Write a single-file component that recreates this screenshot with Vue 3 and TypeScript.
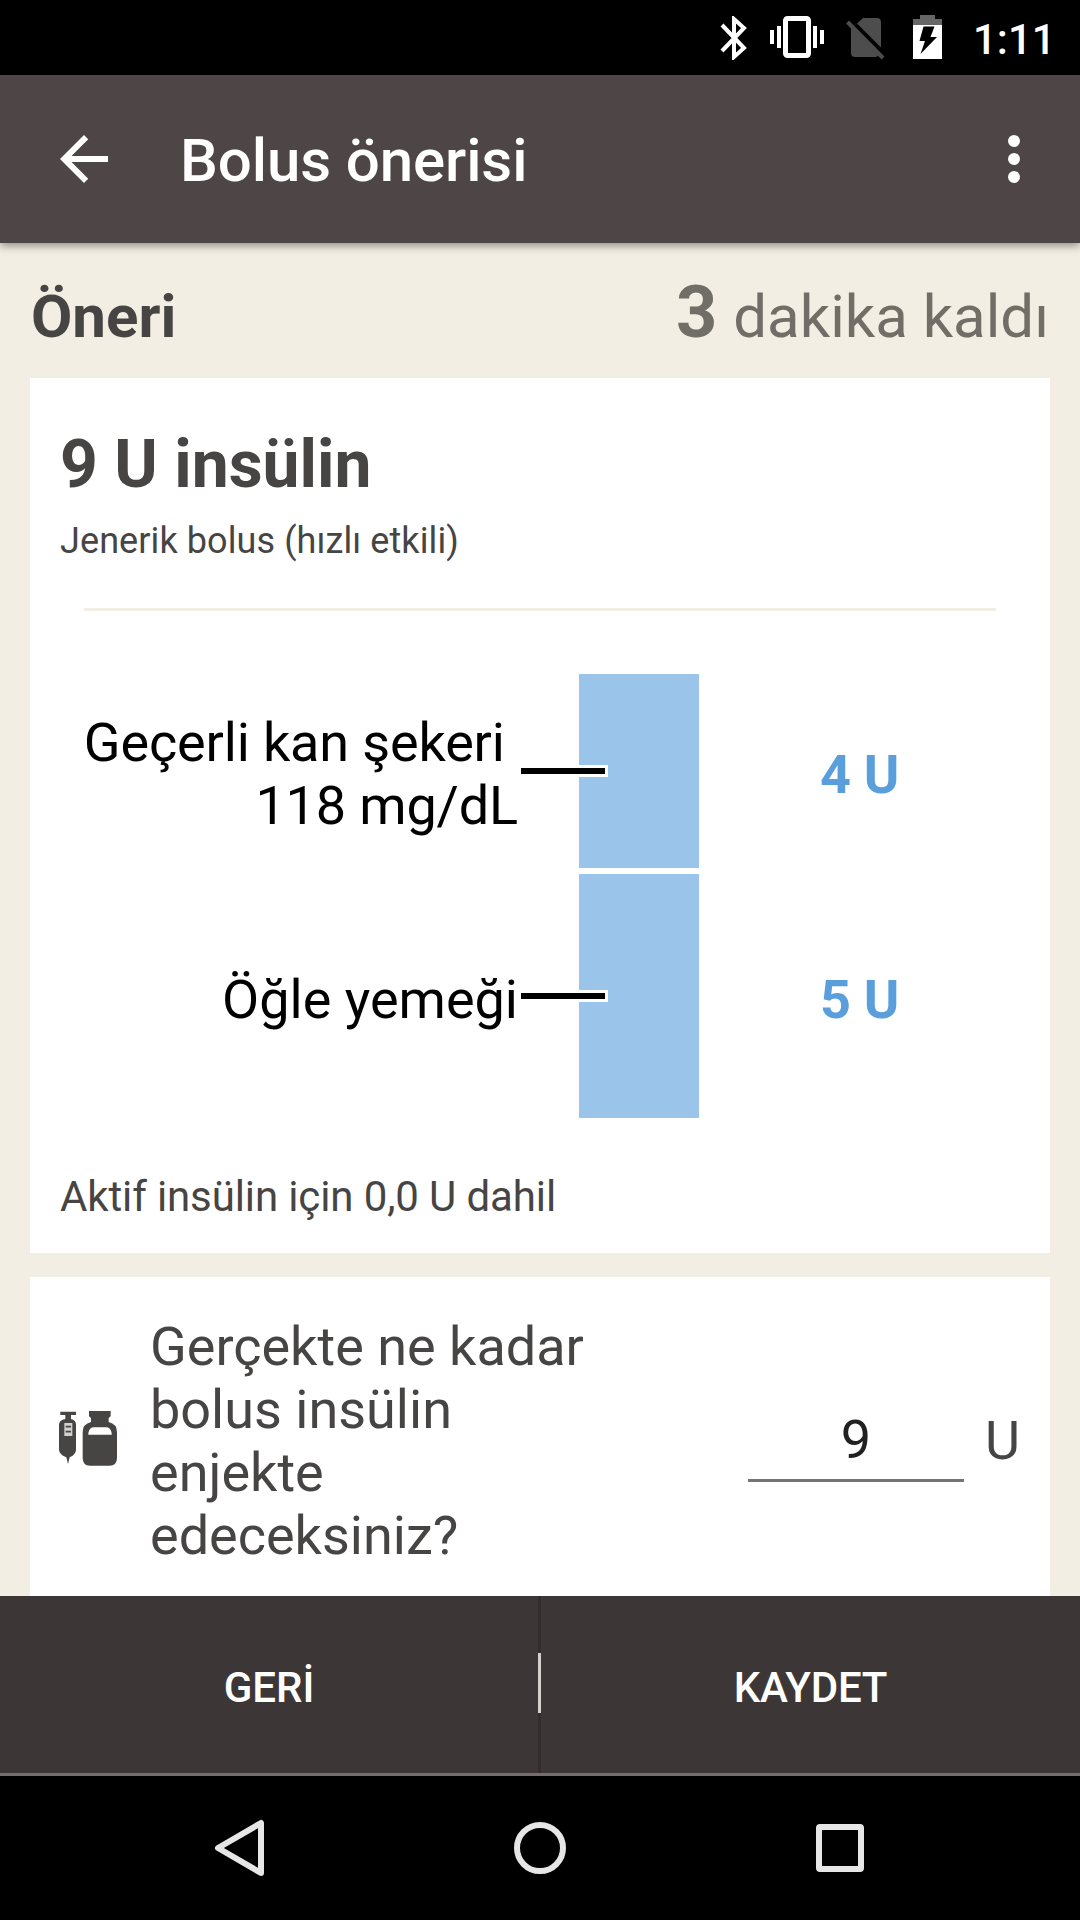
<script setup lang="ts">
interface Dose {
  id: string
  lines: string[]
  amount: string
  height: number
}

const doses: Dose[] = [
  { id: 'glucose', lines: ['Geçerli kan şekeri\u00a0', '118 mg/dL'], amount: '4 U', height: 194 },
  { id: 'meal', lines: ['Öğle yemeği'], amount: '5 U', height: 244 },
]
</script>

<template>
  <div class="screen">
    <div class="status">
      <svg class="bt" width="28" height="44" viewBox="0 0 28 44">
        <path d="M2 9 L24 32 L14 41 V3 L24 12 L2 35" fill="none" stroke="#fff" stroke-width="4" />
      </svg>
      <svg class="vib" width="54" height="42" viewBox="0 0 54 42">
        <rect x="15.5" y="2.5" width="23" height="37" rx="2" fill="none" stroke="#fff" stroke-width="5" />
        <path d="M0 14h4v14H0zM7 10h4v22H7zM43 10h4v22h-4zM50 14h4v14h-4z" fill="#fff" />
      </svg>
      <svg class="sim" width="39" height="42" viewBox="0 0 39 42">
        <path d="M17 0H31Q35 0 35 4V29.500L11 5.500ZM5 9.500L32 37.500Q31 39 29 39H9Q5 39 5 35Z" fill="#4d4d4d" />
        <path d="M1.500 4L37 40" stroke="#4d4d4d" stroke-width="4" fill="none" />
      </svg>
      <svg class="bat" width="29" height="44" viewBox="0 0 29 44">
        <path d="M7 0H22V4H29V10H0V4H7Z" fill="#666" />
        <path d="M0 10H29V44H0Z" fill="#fff" />
        <path d="M10.500 11.500H21.500L17.500 22H24L7.500 39L12 26H6.500Z" fill="#000" />
      </svg>
      <span class="clock">1:11</span>
    </div>

    <header class="appbar">
      <svg class="back" width="72" height="72" viewBox="0 0 24 24">
        <path d="M20 11H7.830l5.590-5.590L12 4l-8 8 8 8 1.410-1.410L7.830 13H20v-2z" fill="#fff" />
      </svg>
      <h1 class="title">Bolus önerisi</h1>
      <svg class="more" width="72" height="72" viewBox="0 0 24 24" fill="#fff">
        <circle cx="12" cy="6" r="2" />
        <circle cx="12" cy="12" r="2" />
        <circle cx="12" cy="18" r="2" />
      </svg>
    </header>

    <main class="content">
      <div class="heading">
        <h2 class="section">Öneri</h2>
        <div class="remaining"><b>3</b> dakika kaldı</div>
      </div>

      <section class="card advice">
        <div class="total">9 U insülin</div>
        <div class="kind">Jenerik bolus (hızlı etkili)</div>
        <div class="rule"></div>
        <div class="chart">
          <div v-for="dose in doses" :key="dose.id" class="dose" :style="{ height: dose.height + 'px' }">
            <div class="label" :class="dose.id">
              <div v-for="line in dose.lines" :key="line">{{ line }}</div>
            </div>
            <div class="bar"><i class="leader"></i></div>
            <div class="amount">{{ dose.amount }}</div>
          </div>
        </div>
        <div class="active">Aktif insülin için 0,0 U dahil</div>
      </section>

      <section class="card entry">
        <svg class="vial" width="60" height="57" viewBox="54 60 180 171">
          <g fill="#474444">
            <path d="M61 65H108V75H93V87Q108 91 108 104V178Q108 190 98 197L89 202L84 222L79 202L69 197Q57 190 57 178V104Q57 91 76 87V75H61Z" />
            <path d="M147 63H212V79L206 84V96Q231 102 231 126V204Q231 227 208 227H150Q128 227 128 204V126Q128 102 153 96V84L147 79Z" />
          </g>
          <path d="M145 134V129Q148 112 162 112H198Q212 112 215 129V134Z" fill="#fff" />
          <path d="M73 99H97V138H73Z" fill="#d2d1d1" />
          <path d="M77 110H93M77 125H93" stroke="#474444" stroke-width="5" />
        </svg>
        <p class="question">Gerçekte ne kadar bolus insülin enjekte edeceksiniz?</p>
        <div class="field">9</div>
        <div class="unit">U</div>
      </section>
    </main>

    <div class="actions">
      <div class="action back-action">GERİ</div>
      <div class="split"><i></i></div>
      <div class="action save-action">KAYDET</div>
    </div>

    <nav class="nav">
      <svg width="60" height="60" viewBox="0 0 60 60">
        <path d="M8 30L51 5V55Z" fill="none" stroke="#e6e6e6" stroke-width="6" stroke-linejoin="round" />
      </svg>
      <svg width="60" height="60" viewBox="0 0 60 60">
        <circle cx="30" cy="30" r="23" fill="none" stroke="#e6e6e6" stroke-width="6" />
      </svg>
      <svg width="60" height="60" viewBox="0 0 60 60">
        <rect x="9" y="9" width="42" height="42" rx="1" fill="none" stroke="#e6e6e6" stroke-width="6" />
      </svg>
    </nav>
  </div>
</template>

<style>
body {
  margin: 0;
}
</style>

<style scoped>
.screen {
  width: 1080px;
  height: 1920px;
  display: flex;
  flex-direction: column;
  overflow: hidden;
  background: #f2eee3;
  color: #474444;
  font-family: Roboto, "Noto Sans", sans-serif;
}
svg {
  display: block;
  flex: none;
}
.status {
  flex: none;
  height: 75px;
  box-sizing: border-box;
  padding: 0 30px 0 720px;
  display: flex;
  align-items: flex-start;
  background: #000;
  color: #fff;
}
.bt {
  margin-top: 16px;
}
.vib {
  margin: 16px 0 0 22px;
}
.sim {
  margin: 18px 0 0 22px;
}
.bat {
  margin: 15px 0 0 28px;
}
.clock {
  margin: 15px 0 0 31px;
  font-size: 42px;
  line-height: 50px;
  font-weight: 500;
}
.appbar {
  flex: none;
  position: relative;
  z-index: 1;
  height: 168px;
  box-sizing: border-box;
  padding: 0 30px 0 48px;
  display: flex;
  align-items: center;
  background: #4e4546;
  box-shadow: 0 3px 8px rgba(0, 0, 0, 0.4);
  color: #fff;
}
.title {
  flex: 1;
  margin: 4px 0 0 60px;
  font-size: 60px;
  line-height: 72px;
  font-weight: 500;
  letter-spacing: -0.1px;
}
.content {
  flex: none;
  height: 1353px;
  box-sizing: border-box;
  padding: 0 30px;
  display: flex;
  flex-direction: column;
  overflow: hidden;
}
.heading {
  flex: none;
  height: 135px;
  box-sizing: border-box;
  padding: 30px 1px 0;
  display: flex;
  justify-content: space-between;
  align-items: baseline;
  line-height: 80px;
}
.section {
  margin: 0;
  font-size: 60px;
  font-weight: 700;
}
.remaining {
  font-size: 60px;
  color: #716e67;
}
.remaining b {
  margin-right: 1px;
  font-size: 72px;
}
.card {
  flex: none;
  background: #fff;
}
.advice {
  height: 875px;
  box-sizing: border-box;
  padding-top: 48px;
}
.total {
  padding-left: 30px;
  font-size: 66px;
  line-height: 78px;
  font-weight: 700;
}
.kind {
  margin-top: 16px;
  padding-left: 30px;
  font-size: 36px;
  line-height: 42px;
  letter-spacing: 0.09px;
}
.rule {
  height: 3px;
  margin: 46px 54px 0;
  background: #f2eee3;
}
.chart {
  margin-top: 63px;
  display: flex;
  flex-direction: column;
  gap: 6px;
}
.dose {
  display: flex;
  align-items: center;
  font-size: 54px;
  line-height: 63px;
}
.label {
  width: 488px;
  padding-top: 6px;
  text-align: right;
  white-space: nowrap;
  color: #000;
}
.glucose {
  letter-spacing: -0.15px;
}
.bar {
  position: relative;
  width: 120px;
  margin-left: 61px;
  align-self: stretch;
  background: #9ac4ea;
}
.leader {
  position: absolute;
  left: -58px;
  top: 50%;
  width: 84px;
  height: 6px;
  margin-top: -3px;
  background: #000;
  box-shadow: 0 0 0 3px #fff;
}
.amount {
  width: 321px;
  padding-top: 6px;
  text-align: center;
  font-weight: 700;
  letter-spacing: -0.3px;
  color: #5a9edc;
}
.active {
  margin-top: 54px;
  padding-left: 30px;
  font-size: 42px;
  line-height: 50px;
  letter-spacing: -0.12px;
}
.entry {
  height: 330px;
  margin-top: 24px;
  box-sizing: border-box;
  padding: 38px 30px 0 28px;
  display: flex;
  align-items: flex-start;
  font-size: 54px;
  line-height: 63px;
}
.vial {
  margin-top: 95px;
}
.question {
  width: 450px;
  margin: 0 0 0 32px;
}
.field {
  width: 216px;
  height: 74px;
  box-sizing: border-box;
  margin: 93px 0 0 148px;
  border-bottom: 3px solid #757575;
  text-align: center;
  color: #212121;
}
.unit {
  margin: 94px 0 0 21px;
}
.actions {
  flex: none;
  height: 180px;
  box-sizing: border-box;
  display: flex;
  background: #3c3736;
  border-bottom: 3px solid #766d6c;
  color: #fff;
}
.action {
  padding-top: 67px;
  text-align: center;
  font-size: 42px;
  line-height: 50px;
  font-weight: 500;
}
.back-action {
  width: 538px;
}
.save-action {
  flex: 1;
  letter-spacing: -0.25px;
}
.split {
  width: 3px;
  display: flex;
  flex-direction: column;
  background: #332e2e;
}
.split i {
  height: 60px;
  margin-top: 57px;
  background: #d6d0cc;
}
.nav {
  flex: none;
  height: 144px;
  display: flex;
  justify-content: center;
  align-items: center;
  gap: 240px;
  background: #000;
}
</style>
